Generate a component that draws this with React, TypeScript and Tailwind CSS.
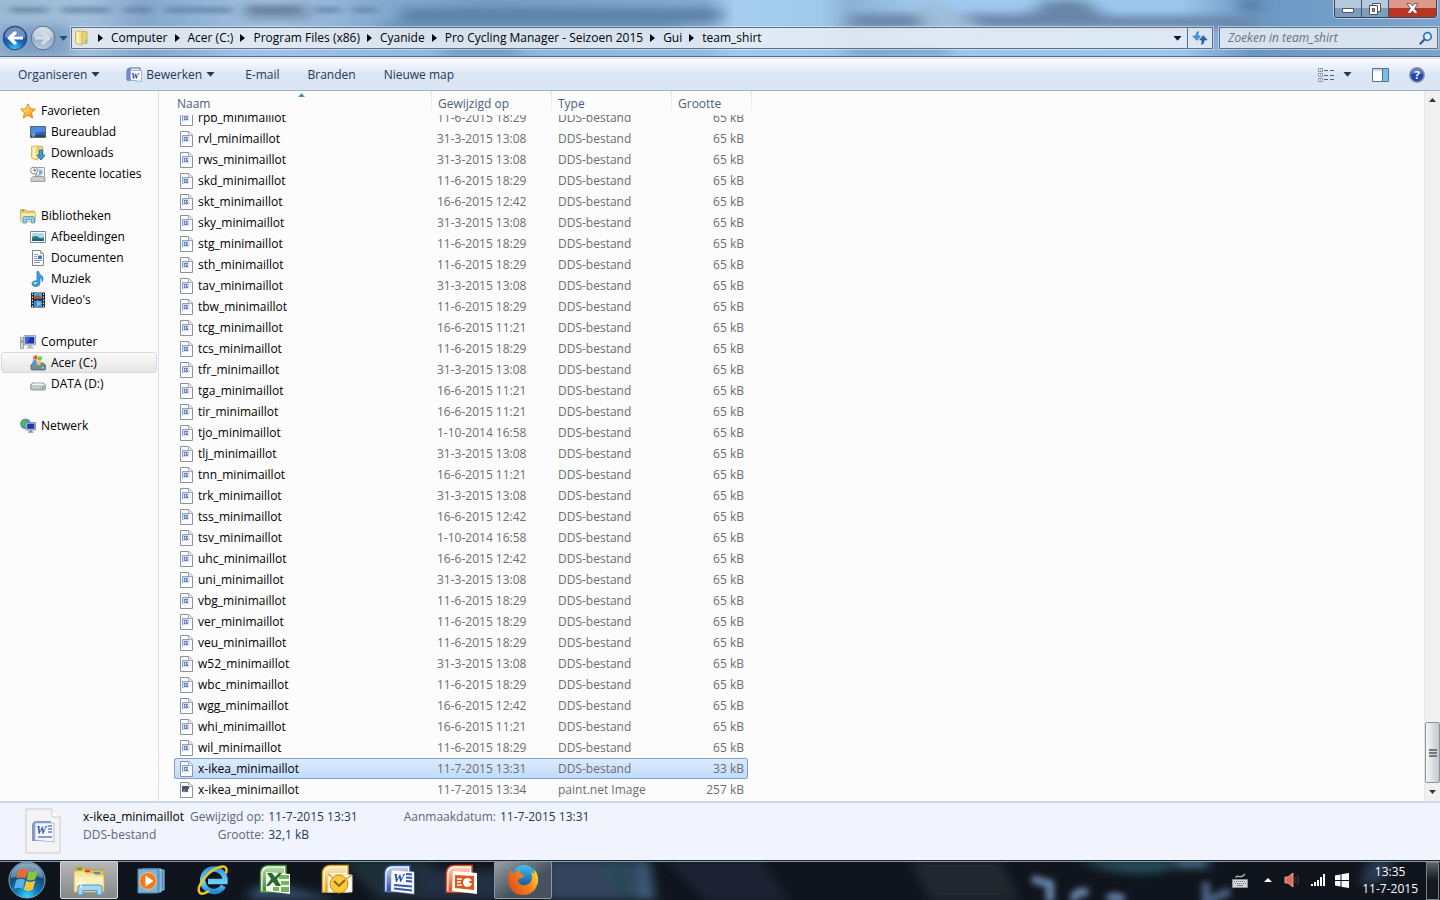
import type { ReactNode } from "react";

type FileRow = { name: string; date: string; type: string; size: string };

const A = "31-3-2015 13:08";
const B = "11-6-2015 18:29";
const C = "16-6-2015 12:42";
const D = "16-6-2015 11:21";
const E = "1-10-2014 16:58";

const teams: [string, string][] = [
  ["rpb", B], ["rvl", A], ["rws", A], ["skd", B], ["skt", C], ["sky", A], ["stg", B], ["sth", B],
  ["tav", A], ["tbw", B], ["tcg", D], ["tcs", B], ["tfr", A], ["tga", D], ["tir", D], ["tjo", E],
  ["tlj", A], ["tnn", D], ["trk", A], ["tss", C], ["tsv", E], ["uhc", C], ["uni", A], ["vbg", B],
  ["ver", B], ["veu", B], ["w52", A], ["wbc", B], ["wgg", C], ["whi", D], ["wil", B],
];

const files: FileRow[] = [
  ...teams.map(([t, date]) => ({ name: `${t}_minimaillot`, date, type: "DDS-bestand", size: "65 kB" })),
  { name: "x-ikea_minimaillot", date: "11-7-2015 13:31", type: "DDS-bestand", size: "33 kB" },
  { name: "x-ikea_minimaillot", date: "11-7-2015 13:34", type: "paint.net Image", size: "257 kB" },
];

const crumbs = ["Computer", "Acer (C:)", "Program Files (x86)", "Cyanide", "Pro Cycling Manager - Seizoen 2015", "Gui", "team_shirt"];

/* ---------- icons ---------- */

const DocIcon = ({ paint = false }: { paint?: boolean }) => (
  <svg width="13" height="16" viewBox="0 0 13 16" className="shrink-0">
    <path d="M.5.5h8.500l3.500 3.500v11.500H.5z" fill="#fbfcfd" stroke="#8e9196" />
    <path d="M8.500.5v4h4" fill="#e4e6ea" stroke="#a9acb1" />
    {paint ? (
      <>
        <path d="M2 4h6v6H2z" fill="#44546f" />
        <path d="M2 10l3-3 3 3z" fill="#8b97ae" />
        <path d="M5 10l4-5" stroke="#6b4a48" strokeWidth="1.500" />
      </>
    ) : (
      <>
        <path d="M2 4h7v7H2z" fill="#d3dcf0" />
        <path d="M2.500 11V4.500H9" fill="none" stroke="#8ba1d2" />
        <path d="M4 6h4v4H4z" fill="#6a85c2" />
        <path d="M5 7h1v2H5zM7 7h1v1H7z" fill="#e4eaf6" />
      </>
    )}
  </svg>
);

const WordSmall = () => (
  <svg width="16" height="16" viewBox="0 0 16 16">
    <path d="M1 4q0-3 3-3h10v12H1z" fill="#e9eefa" stroke="#4a66ad" />
    <path d="M1 14V4q0-3 3-3h1v12z" fill="#6f8bcb" />
    <path d="M4.500 3.500h11v11l-11-1.500z" fill="#fff" stroke="#9fb0d6" />
    <text x="5" y="12" fontSize="9" fontWeight="700" fontStyle="italic" fill="#2a479c" fontFamily="Liberation Serif, serif">W</text>
  </svg>
);

const StarIcon = () => (
  <svg width="16" height="16" viewBox="0 0 16 16">
    <defs>
      <linearGradient id="star" x1="0" y1="0" x2="1" y2="1">
        <stop offset="0" stopColor="#fff3a0" />
        <stop offset=".5" stopColor="#ffc33c" />
        <stop offset="1" stopColor="#f08018" />
      </linearGradient>
    </defs>
    <path d="M8 .8l2.200 4.900 5.200.5-3.900 3.500 1.200 5.300L8 12.200 3.300 15l1.200-5.300L.6 6.200l5.200-.5z" fill="url(#star)" stroke="#d98324" strokeWidth=".9" />
  </svg>
);

const DesktopIcon = () => (
  <svg width="16" height="16" viewBox="0 0 16 16">
    <path d="M.5 2.500h15v11H.5z" fill="#2d62c0" stroke="#5b6470" />
    <path d="M1 3h14v5Q8 7 1 11z" fill="#4f8ae0" />
    <path d="M1 11h14v2H1z" fill="#39404b" />
    <circle cx="3.500" cy="11" r="2" fill="#3f9fdc" />
    <path d="M2.500 10h1v1h-1z" fill="#f0a33a" />
    <path d="M4 10h1v1H4z" fill="#8fd04a" />
  </svg>
);

const FolderIcon = ({ arrow = false }: { arrow?: boolean }) => (
  <svg width="16" height="16" viewBox="0 0 16 16">
    <path d="M5 1.500h7q1 0 1 1v11H5z" fill="#ead27c" stroke="#c4a444" strokeWidth=".8" />
    <path d="M1.500 1.500L7 .8q1 0 1 1v13.400l-5-1.500q-1.500 0-1.500-1z" fill="#f5e18c" stroke="#cdae4e" strokeWidth=".8" />
    <path d="M3 2h2v11H3z" fill="#fff4bf" />
    {arrow ? (
      <path d="M9.500 5h3v5H15l-4 5-4-5h2.500z" fill="#3f9ade" stroke="#1c62a6" strokeWidth=".8" />
    ) : (
      <path d="M11 9.500h1.500v3H11z" fill="#63bfe8" />
    )}
  </svg>
);

const RecentIcon = () => (
  <svg width="16" height="16" viewBox="0 0 16 16">
    <path d="M5.500 1.500h9v11h-9z" fill="#eef1f4" stroke="#9ba1a8" />
    <path d="M7 4h5M9 6h4M6 9h5" stroke="#7ea3c8" />
    <path d="M9 5h3v3H9z" fill="#74a6cf" />
    <path d="M1 12.500l2-2h10l2 2v3H1z" fill="#c8ccd1" stroke="#888d94" strokeWidth=".8" />
    <circle cx="4" cy="4.500" r="3.500" fill="#f7f8f9" stroke="#878c92" />
    <path d="M4 2.500v2h2" fill="none" stroke="#4f545b" />
  </svg>
);

const LibraryIcon = () => (
  <svg width="16" height="16" viewBox="0 0 16 16">
    <path d="M.5 2.500q0-1 1-1h4l1 1.500h8v9H.5z" fill="#e9cf73" stroke="#c0a149" strokeWidth=".7" />
    <path d="M.7 4.500h14.800v9H.7z" fill="#fae9a0" stroke="#cfb35c" strokeWidth=".7" />
    <path d="M2 2h2v1H2z" fill="#3cae3c" />
    <path d="M3 15V10q0-1.500 1.500-1.500h8.500q1.500 0 1.500 1.500v5h-3v-3.500h-5V15z" fill="#8fcdee" stroke="#4793c2" strokeWidth=".8" />
  </svg>
);

const PictureIcon = () => (
  <svg width="16" height="16" viewBox="0 0 16 16">
    <path d="M.5 2.500h15v11H.5z" fill="#fff" stroke="#7e8790" />
    <path d="M2 4h12v8H2z" fill="#a9dcf4" />
    <path d="M2 8q4-2 7 .5 3 1 5-.5v4H2z" fill="#2f8568" />
    <path d="M2 10.500q6-1.500 12 .5v1H2z" fill="#18629c" />
  </svg>
);

const DocumentIcon = () => (
  <svg width="16" height="16" viewBox="0 0 16 16">
    <path d="M2.500.5h8l3 3v12h-11z" fill="#fdfdfe" stroke="#80868e" />
    <path d="M10.500.5v3h3" fill="#dfe3e8" stroke="#969ba2" />
    <path d="M4 4.500h4M4 6.500h3M4 8.500h3M4 10.500h8M4 12.500h6" stroke="#8c9bb5" />
    <path d="M8 5.500h4V9H8z" fill="#3d7cc4" />
  </svg>
);

const MusicIcon = () => (
  <svg width="16" height="16" viewBox="0 0 16 16">
    <path d="M8.500.5q.5 2.500 3 4 2.800 2.500.8 6 .2-3-2.300-4.200V12q0 3.300-4 3.500-4 0-4-2.800 0-3.200 5-2.900V.5z" fill="#3d9fe0" stroke="#1d6fb5" strokeWidth=".7" />
    <ellipse cx="5.200" cy="12.200" rx="1.800" ry="1.100" fill="#a3dbf8" />
  </svg>
);

const VideoIcon = () => (
  <svg width="16" height="16" viewBox="0 0 16 16">
    <path d="M1 .5h14v15H1z" fill="#23282e" />
    <path d="M4 1h8v6H4z" fill="#4da4dc" />
    <path d="M4 8.500h8V15H4z" fill="#3c8ed0" />
    <path d="M4 5l4-2 4 3v1H4z" fill="#b0512e" />
    <path d="M7 8.500l5 3-5 3z" fill="#74c4f0" />
    <path d="M2.500 1.500v14M13.500 1.500v14" stroke="#dfe6ec" strokeDasharray="1.500 1.500" />
  </svg>
);

const ComputerIcon = () => (
  <svg width="16" height="16" viewBox="0 0 16 16">
    <path d="M.5 3.500h3v11h-3z" fill="#d5d9dd" stroke="#888e95" strokeWidth=".8" />
    <path d="M1.300 6h1.300v3H1.300z" fill="#4bb541" />
    <path d="M4 1.500h11.500v9.500H4z" fill="#d9dde2" stroke="#8a9097" strokeWidth=".8" />
    <path d="M5.300 2.800h9v6.800h-9z" fill="#1b35b5" />
    <path d="M5.300 2.800h5L7 9.600H5.300z" fill="#4468dd" />
    <path d="M8.500 11h3v2h2v1.500h-7V13h2z" fill="#aab0b7" />
  </svg>
);

const DriveIcon = ({ system = false }: { system?: boolean }) => (
  <svg width="16" height="16" viewBox="0 0 16 16">
    {system ? (
      <>
        <path d="M1 10l2-2h10l2.500 2v4q0 1-1 1h-12q-1.500 0-1.500-1z" fill="#6c8e9c" stroke="#4b6470" strokeWidth=".8" />
        <path d="M12 12h2v1.500h-2z" fill="#8df070" />
        <path d="M3.500 1.500Q6-.5 7.500 1L7 5Q5 3.500 3 5z" fill="#ee5b28" />
        <path d="M8.200 1.200q2 1 4-.2l-.8 4q-2 1-3.900 0z" fill="#7cc142" />
        <path d="M2.800 5.800q2-1.300 4-.2l-.7 3.900q-2-1-4 0z" fill="#3f9de0" />
        <path d="M7.300 5.900q2 1 4-.1l-.9 4q-2 1-3.900 0z" fill="#fac42d" />
      </>
    ) : (
      <>
        <path d="M.6 10Q.6 7.500 3 7h10q2.500.5 2.500 3v2.500q0 1.500-1.500 1.500H2Q.6 14 .6 12.500z" fill="#c5c8cb" stroke="#7b7f84" strokeWidth=".8" />
        <path d="M2 8.500q1-1 2-1h8.500q1.500 0 2 1.500H2z" fill="#f6f7f8" />
        <path d="M12 10.500h1.800v2H12z" fill="#4cc034" />
      </>
    )}
  </svg>
);

const NetworkIcon = () => (
  <svg width="16" height="16" viewBox="0 0 16 16">
    <circle cx="5.500" cy="5.800" r="5.300" fill="#3d8fd4" />
    <path d="M2 2.500q3-2 5-1L5 5l2 2-2 3-3-3-1.500-.5Q.5 4 2 2.500z" fill="#59b848" />
    <path d="M6 4.500h9.500v7.500H6z" fill="#c9d0da" stroke="#7f8791" strokeWidth=".8" />
    <path d="M7.200 5.600h7.200v5.200H7.200z" fill="#1c37bd" />
    <path d="M9.500 12h2.500v1.500h1.500v1.300H8v-1.300h1.500z" fill="#8d949d" />
  </svg>
);

const Down = () => (
  <svg width="9" height="5" viewBox="0 0 9 5">
    <path d="M.5 0h8L4.500 4.800z" fill="currentColor" />
  </svg>
);

const WindowsOrb = () => (
  <svg width="40" height="40" viewBox="0 0 40 40">
    <defs>
      <radialGradient id="orb" cx=".5" cy=".95" r=".9">
        <stop offset="0" stopColor="#2fd8ff" />
        <stop offset=".35" stopColor="#1279bb" />
        <stop offset=".7" stopColor="#164a78" />
        <stop offset="1" stopColor="#5e87a5" />
      </radialGradient>
    </defs>
    <circle cx="20" cy="20" r="18" fill="url(#orb)" stroke="#7fa9c6" strokeWidth="1" />
    <path d="M4 18Q5 4 20 3.500 35 4 36 18q-15-5-32 0z" fill="#fff" opacity=".3" />
    <path d="M11.500 10.500q4.500-3 9-.5l-2.200 8.800q-4.300-2.500-8.800 0z" fill="#ee6a2e" />
    <path d="M21.800 10.800q4.500 2.500 9-.8l-2.300 9q-4.500 2.800-8.900.2z" fill="#8cc63f" />
    <path d="M9.200 20.200q4.500-2.700 8.800-.2l-2.200 9q-4.500-2.500-9 .2z" fill="#58b1ea" />
    <path d="M19.200 20.700q4.500 2.500 9-.2l-2.300 9q-4.500 2.700-9 .1z" fill="#fdc530" />
  </svg>
);

const ExplorerIcon = () => (
  <svg width="34" height="32" viewBox="0 0 34 32">
    <path d="M3 5q0-2 2-2h6l2 2h6l2 1h9q2 0 2 2v20H3z" fill="#e0bd58" stroke="#b5923a" strokeWidth=".8" />
    <path d="M2 7h11l1 2h9l1 2h8v17H2z" fill="#f7e59b" stroke="#d0b056" strokeWidth=".8" />
    <path d="M5 4h5v2H5z" fill="#35b13b" />
    <path d="M13 6h5v2h-5z" fill="#d94830" />
    <path d="M22 8h6v2h-6z" fill="#3f8cdc" />
    <path d="M3 13h28v8H3z" fill="#fdf2bd" opacity=".8" />
    <path d="M6 31v-7q0-3 3-3h18q3 0 3 3v7h-5v-4.500H11V31z" fill="#a3d8f2" stroke="#4a96c4" />
    <path d="M9 14v10M4 19h10" stroke="#fff" />
  </svg>
);

const MediaPlayerIcon = () => (
  <svg width="30" height="30" viewBox="0 0 30 30">
    <path d="M10 5h18v20H10z" fill="#4d87b8" stroke="#a6cde8" />
    <path d="M6 4h19v23H6z" fill="#6aa4d0" stroke="#a6cde8" />
    <path d="M2 4h20v24H2z" fill="#7fb4dc" stroke="#4b85b4" />
    <circle cx="12" cy="16" r="8.500" fill="#f27a1c" stroke="#fbbd82" />
    <path d="M9.500 10.500l8 5.500-8 5.500z" fill="#fff" />
  </svg>
);

const IeIcon = () => (
  <svg width="32" height="32" viewBox="0 0 32 32">
    <defs>
      <linearGradient id="ie" x1="0" y1="0" x2="0" y2="1">
        <stop offset="0" stopColor="#2f9fe6" />
        <stop offset=".6" stopColor="#6bd2fa" />
        <stop offset="1" stopColor="#2389d8" />
      </linearGradient>
    </defs>
    <path d="M26.500 22A11.200 11.200 0 1 1 28 17.500H11" fill="none" stroke="url(#ie)" strokeWidth="5.500" />
    <path d="M29 9.500Q31 2 25 2.500 16 3.500 7 14.500-1 25 3 29q3 2 9-2" fill="none" stroke="#f7c21c" strokeWidth="2.500" />
  </svg>
);

type OfficeProps = { id: string; color: string; light: string; children: ReactNode };

const OfficeIcon = ({ id, color, light, children }: OfficeProps) => (
  <svg width="32" height="32" viewBox="0 0 32 32">
    <defs>
      <linearGradient id={id} x1="0" y1="0" x2="0" y2="1">
        <stop offset="0" stopColor={light} />
        <stop offset="1" stopColor={color} />
      </linearGradient>
    </defs>
    <path d="M1.500 28V9Q2 2 9 1.500h18V28z" fill="#fff" stroke={color} strokeWidth="1.500" />
    <path d="M3.500 27V10Q4 4 10 3.500h15V9H8v18z" fill={`url(#${id})`} />
    {children}
  </svg>
);

const ExcelIcon = () => (
  <OfficeIcon id="xls" color="#3c8a35" light="#b3d9a6">
    <path d="M7 8l24 2v20L7 27z" fill="#f4faf0" />
    <path d="M20 11h10v4H20zM22 17h8v4h-8zM22 23h8v5h-8zM14 23h6v4h-6z" fill="#75b45c" />
    <path d="M8 9h5l3 4 4-4h3l-5 6 4 7h-5l-3-4-4 4H7l5-7z" fill="#256d28" />
  </OfficeIcon>
);

const OutlookIcon = () => (
  <OfficeIcon id="olk" color="#e59f14" light="#fde7ae">
    <path d="M7 10l24 1v17H7z" fill="#fff" stroke="#e5d6ab" />
    <path d="M7 10l12 9 12-8" fill="none" stroke="#d69722" strokeWidth="1.500" />
    <circle cx="18" cy="20" r="9" fill="#fbca3b" stroke="#c98c14" />
    <path d="M13 17l5 5 6-6" fill="none" stroke="#8a640e" strokeWidth="1.800" />
  </OfficeIcon>
);

const WordIcon = () => (
  <OfficeIcon id="doc" color="#2b4f9e" light="#c2d0ec">
    <path d="M9 6l22 2v22L8 27z" fill="#fbfcff" stroke="#b8c5e4" strokeWidth=".6" />
    <text x="10" y="18" fontSize="13" fontWeight="700" fontStyle="italic" fill="#24479a" fontFamily="Liberation Serif, serif">W</text>
    <path d="M23 10l6 .5M23 13.500l6 .5M23 17l6 .5M11 21l18 1.500M11 24.500l18 2" stroke="#3558a8" strokeWidth="1.800" />
  </OfficeIcon>
);

const PowerPointIcon = () => (
  <OfficeIcon id="ppt" color="#dd4f1c" light="#fbd0bb">
    <path d="M8 7l24 2v21L7 27z" fill="#fff" />
    <path d="M10 11l19 1v14l-19-2z" fill="#e2551d" />
    <circle cx="22.500" cy="18.500" r="4.500" fill="#fff" />
    <path d="M23 18l5-2v4z" fill="#e2551d" />
    <path d="M12 15h5M12 18h4M12 21h5" stroke="#fff" strokeWidth="1.500" />
  </OfficeIcon>
);

const FirefoxIcon = () => (
  <svg width="32" height="32" viewBox="0 0 32 32">
    <defs>
      <linearGradient id="fox" x1="0" y1=".8" x2="1" y2=".2">
        <stop offset="0" stopColor="#dd4a1e" />
        <stop offset=".6" stopColor="#f5871c" />
        <stop offset="1" stopColor="#ffe43a" />
      </linearGradient>
      <linearGradient id="globe" x1="0" y1="0" x2="0" y2="1">
        <stop offset="0" stopColor="#3fc4f2" />
        <stop offset="1" stopColor="#123f86" />
      </linearGradient>
    </defs>
    <circle cx="17" cy="13.500" r="12.500" fill="url(#globe)" />
    <path d="M27 5q5 6 4 13-3 13-15 13T1 18Q.5 11 4 5l1 4 5-1 3-3q0 4 1 5l3 2q-1 2-5 2.500-2 2 0 4.500 4 4 9 1 6-3 3-13l3 3q1-3 0-8z" fill="url(#fox)" />
  </svg>
);

/* ---------- window chrome ---------- */

const TitleGlass = () => (
  <svg className="absolute inset-0 h-full w-full" viewBox="0 0 1440 56" preserveAspectRatio="none" aria-hidden="true">
    <defs>
      <filter id="soft" x="-20%" y="-60%" width="140%" height="220%">
        <feGaussianBlur stdDeviation="9 4" />
      </filter>
      <filter id="labels" x="-10%" y="-100%" width="120%" height="300%">
        <feGaussianBlur stdDeviation="5 2" />
      </filter>
      <linearGradient id="glass" x1="0" y1="0" x2="1" y2="0">
        <stop offset="0" stopColor="#9db9d4" />
        <stop offset=".06" stopColor="#a3bfdb" />
        <stop offset=".1" stopColor="#85a7cb" />
        <stop offset=".19" stopColor="#a3c4e4" />
        <stop offset=".26" stopColor="#86abd0" />
        <stop offset=".34" stopColor="#769dc5" />
        <stop offset=".49" stopColor="#83abd2" />
        <stop offset=".51" stopColor="#a8cfef" />
        <stop offset=".57" stopColor="#a0c8ea" />
        <stop offset=".59" stopColor="#8db3d2" />
        <stop offset=".64" stopColor="#a0caf0" />
        <stop offset=".82" stopColor="#9cc6ec" />
        <stop offset=".87" stopColor="#6a98c4" />
        <stop offset="1" stopColor="#7da4cb" />
      </linearGradient>
    </defs>
    <path d="M0 0h1440v56H0z" fill="url(#glass)" />
    <g filter="url(#soft)">
      <path d="M400 8h320v14H400z" fill="#5f81a6" />
      <path d="M380 22h300v14H380z" fill="#6b95c0" />
      <path d="M245 4h65v16h-65z" fill="#7d93af" />
      <path d="M850 14h180l15-14h40l20 16h150v12H850z" fill="#6786a8" />
      <path d="M915 0h20l50 30h-60z" fill="#9dbedc" />
      <path d="M1240 0h20v10h-20z" fill="#55749a" />
      <path d="M0 26h70v30H0z" fill="#7c9fc4" />
      <path d="M220 49h900v8H220z" fill="#9cc4ea" />
      <path d="M440 48h80v7h-80zM850 48h100v7H850z" fill="#7198c0" />
    </g>
    <g filter="url(#labels)" fill="#5f7d9e" opacity=".7">
      <path d="M10 7h38v6H10zM62 7h48v6H62zM124 7h28v6h-28zM166 7h66v6h-66zM248 7h52v6h-52zM316 7h24v6h-24zM352 7h24v6h-24z" />
    </g>
  </svg>
);

const WindowButtons = () => (
  <div className="absolute right-[3px] top-0 flex h-[18px] overflow-hidden rounded-b border border-t-0 border-[#33465e] shadow-[0_0_0_1px_#b8cde3]">
    <button aria-label="Minimaliseren" className="flex w-[27px] items-center justify-center border-r border-[#3f536c] bg-gradient-to-b from-[#b7c9dc] from-50% to-[#7f9dbb] to-50%">
      <svg width="12" height="5" viewBox="0 0 12 5" className="mt-1"><path d="M.5.5h11v4H.5z" fill="#fff" stroke="#4c5666" /></svg>
    </button>
    <button aria-label="Vorig formaat" className="flex w-[27px] items-center justify-center border-r border-[#3f536c] bg-gradient-to-b from-[#b7c9dc] from-50% to-[#7f9dbb] to-50%">
      <svg width="12" height="12" viewBox="0 0 12 12">
        <path d="M3.500.5h8v8h-8z" fill="#fff" stroke="#4c5666" />
        <path d="M.5 2.500h8v9h-8z" fill="#fff" stroke="#4c5666" />
        <path d="M3.500 5.500h2v3h-2z" fill="#8ba5c0" stroke="#4c5666" />
      </svg>
    </button>
    <button aria-label="Sluiten" className="flex w-[47px] items-center justify-center bg-gradient-to-b from-[#dd9a8c] from-50% to-[#bb3420] to-50%">
      <svg width="13" height="11" viewBox="0 0 13 11">
        <path d="M1 .7h3.500l2 2.200 2-2.200H12L8.700 5.400 12 10.300H8.500l-2-2.300-2 2.300H1l3.300-4.900z" fill="#fff" stroke="#5a4a52" strokeWidth=".9" />
      </svg>
    </button>
  </div>
);

const NavArrow = ({ active = false }: { active?: boolean }) => (
  <svg width="26" height="26" viewBox="0 0 26 26">
    <defs>
      <radialGradient id="back" cx=".5" cy="1" r=".9">
        <stop offset="0" stopColor="#3fd0ff" />
        <stop offset=".5" stopColor="#1660b8" />
        <stop offset="1" stopColor="#2a4f9a" />
      </radialGradient>
      <linearGradient id="fwd" x1="0" y1="0" x2="0" y2="1">
        <stop offset="0" stopColor="#c4d2e0" />
        <stop offset=".5" stopColor="#96acc2" />
        <stop offset="1" stopColor="#b7cbdd" />
      </linearGradient>
    </defs>
    <circle cx="13" cy="13" r="11.800" fill={active ? "url(#back)" : "url(#fwd)"} stroke={active ? "#23416f" : "#5c7189"} />
    <path d="M2.500 12.500a10.500 10.500 0 0 1 21 0q-10-3-21 0z" fill="#fff" opacity=".35" />
    {active ? (
      <path d="M5 13l7-6.500h2.500V9l-3 2.500H21v3h-9.500l3 2.500v2.500H12z" fill="#fff" />
    ) : (
      <path d="M21 13l-7-6.500h-2.500V9l3 2.500H5v3h9.500l-3 2.500v2.500H14z" fill="#d3dde7" />
    )}
  </svg>
);

const AddressRow = () => (
  <header className="relative h-[57px] border-b border-[#5c6f8a]">
    <TitleGlass />
    <WindowButtons />
    <div className="relative flex items-center px-[2px] pt-[25px]">
      <button aria-label="Terug"><NavArrow active /></button>
      <button aria-label="Vooruit" className="ml-[2px]"><NavArrow /></button>
      <button aria-label="Recente pagina's" className="ml-[3px] text-[#1d4a80]"><Down /></button>
      <nav aria-label="Adres" className="ml-[3px] flex h-[22px] flex-1 items-center border border-[#5d7186] bg-[#e9eff6]/85 shadow-[0_0_0_1px_#ffffff70]">
        <span className="ml-[2px] mr-px"><FolderIcon /></span>
        <ol className="flex flex-1 items-center">
          {crumbs.map((c) => (
            <li key={c} className="flex items-center">
              <svg width="5" height="8" viewBox="0 0 5 8" className="ml-[7px] mr-2"><path d="M0 0l5 4-5 4z" fill="#000" /></svg>
              <a href="#" className="text-black">{c}</a>
            </li>
          ))}
        </ol>
        <button aria-label="Vorige locaties" className="px-[5px] text-[#08124e]"><Down /></button>
        <button aria-label="Vernieuwen" className="flex h-full w-[25px] items-center justify-center border-l border-[#5d7186]">
          <svg width="16" height="14" viewBox="0 0 16 14">
            <path d="M6.500.5Q4 1 4 4v1H.8l4 4.500L8.500 5H6q0-3 .5-4.500z" fill="#3f9be0" stroke="#2575b9" strokeWidth=".6" />
            <path d="M9.500 13.500q2.500-.5 2.500-3.500V9h3.200l-4-4.500L7.500 9H10q0 3-.5 4.500z" fill="#2f62ad" stroke="#234f92" strokeWidth=".6" />
          </svg>
        </button>
      </nav>
      <form className="ml-[6px] flex h-[22px] w-[219px] items-center border border-[#5d7186] bg-[#e9eff6]/85 shadow-[0_0_0_1px_#ffffff70]">
        <input aria-label="Zoeken" placeholder="Zoeken in team_shirt" className="min-w-0 flex-1 bg-transparent pl-2 italic text-[#5f6670] outline-none placeholder:text-[#6a727c]" />
        <button type="button" aria-label="Zoeken starten" className="mr-1">
          <svg width="14" height="14" viewBox="0 0 14 14">
            <circle cx="8.500" cy="5.500" r="3.800" fill="#dcefff" stroke="#2f74bd" strokeWidth="1.700" />
            <path d="M5.500 8.500L1.500 12.500" stroke="#34548c" strokeWidth="2.200" strokeLinecap="round" />
          </svg>
        </button>
      </form>
    </div>
  </header>
);

const Toolbar = () => (
  <div className="flex h-[34px] items-center border-b border-[#a0afc9] border-t-2 border-t-[#e4e2f4] bg-gradient-to-b from-[#fafcff] to-[#dbe6f4] to-50% pl-[18px] text-[#1e395b]">
    <button className="flex items-center gap-1">Organiseren <Down /></button>
    <button className="ml-[26px] flex items-center gap-1"><WordSmall /> Bewerken <Down /></button>
    <button className="ml-[30px]">E-mail</button>
    <button className="ml-7">Branden</button>
    <button className="ml-7 flex-1 text-left">Nieuwe map</button>
    <button aria-label="Weergave wijzigen" className="flex items-center gap-2">
      <svg width="17" height="14" viewBox="0 0 17 14">
        <path d="M.5.5h4v3h-4zM.5 5.500h4v3h-4zM.5 10.500h4v3h-4z" fill="#fff" stroke="#8a97aa" />
        <path d="M2 1.500h1v1H2z" fill="#3b78c8" /><path d="M2 6.500h1v1H2z" fill="#c54334" /><path d="M2 11.500h1v1H2z" fill="#3b93c8" />
        <path d="M6 2.500h4M12 2.500h4M6 7.500h4M12 7.500h4M6 11.500h4M12 11.500h4" stroke="#53657f" />
      </svg>
      <Down />
    </button>
    <button aria-label="Voorbeeldvenster" className="ml-5">
      <svg width="17" height="14" viewBox="0 0 17 14">
        <path d="M.5.5h16v13H.5z" fill="#fff" stroke="#5a6f8b" />
        <path d="M1 1h10v2H1z" fill="#c9d9ea" />
        <path d="M11 1h5v12h-5z" fill="#74c1e2" /><path d="M10.500 1v12" stroke="#5a6f8b" />
      </svg>
    </button>
    <button aria-label="Help" className="ml-5 mr-[15px]">
      <svg width="16" height="16" viewBox="0 0 16 16">
        <circle cx="8" cy="8" r="7.200" fill="#2247b3" stroke="#8d949e" strokeWidth="1.500" />
        <path d="M2.500 7a5.500 5.500 0 0 1 11 0q-5-2-11 0z" fill="#7c98e0" opacity=".7" />
        <text x="8" y="12" fontSize="11" fontWeight="700" textAnchor="middle" fill="#fff" fontFamily="Open Sans, sans-serif">?</text>
      </svg>
    </button>
  </div>
);

/* ---------- navigation pane ---------- */

type NavItem = { label: string; icon: ReactNode; active?: boolean };

const groups: { title: string; icon: ReactNode; items: NavItem[] }[] = [
  { title: "Favorieten", icon: <StarIcon />, items: [
    { label: "Bureaublad", icon: <DesktopIcon /> },
    { label: "Downloads", icon: <FolderIcon arrow /> },
    { label: "Recente locaties", icon: <RecentIcon /> },
  ] },
  { title: "Bibliotheken", icon: <LibraryIcon />, items: [
    { label: "Afbeeldingen", icon: <PictureIcon /> },
    { label: "Documenten", icon: <DocumentIcon /> },
    { label: "Muziek", icon: <MusicIcon /> },
    { label: "Video's", icon: <VideoIcon /> },
  ] },
  { title: "Computer", icon: <ComputerIcon />, items: [
    { label: "Acer (C:)", icon: <DriveIcon system />, active: true },
    { label: "DATA (D:)", icon: <DriveIcon /> },
  ] },
  { title: "Netwerk", icon: <NetworkIcon />, items: [] },
];

const Sidebar = () => (
  <aside className="flex w-[159px] shrink-0 flex-col gap-[21px] border-r border-[#d6e5f5] px-px pt-[9px]">
    {groups.map((g) => (
      <div key={g.title}>
        <a href="#" className="flex h-[21px] items-center gap-[5px] pl-[19px]">{g.icon} {g.title}</a>
        <ul>
          {g.items.map((it) => (
            <li key={it.label}>
              <a
                href="#"
                className={
                  it.active
                    ? "flex h-[21px] items-center gap-[5px] rounded-[3px] border border-[#d9d9d9] bg-gradient-to-b from-[#fafafa] to-[#e6e6e6] pl-7"
                    : "flex h-[21px] items-center gap-[5px] pl-[29px]"
                }
              >
                {it.icon} {it.label}
              </a>
            </li>
          ))}
        </ul>
      </div>
    ))}
  </aside>
);

/* ---------- file list ---------- */

const headCell = "relative h-6 bg-[#fcfcfc] p-0 pl-[6px] pt-px text-left font-normal leading-3";

const Separator = () => <span className="absolute right-0 top-0 h-5 w-px bg-gradient-to-b from-[#d5e4f3] to-[#eef4fa]" />;

const FileList = () => (
  <main className="flex min-w-0 flex-1">
    {/* column-reverse keeps the list scrolled to its end */}
    <div className="flex flex-1 flex-col-reverse overflow-hidden pb-px pl-[15px]">
      <table className="w-[578px] shrink-0 table-fixed border-separate border-spacing-0">
        <colgroup>
          <col className="w-[258px]" />
          <col className="w-[120px]" />
          <col className="w-[120px]" />
          <col className="w-[76px]" />
          <col className="w-1" />
        </colgroup>
        <thead className="sticky top-0 z-10 text-[#4c607a]">
          <tr>
            <th className="relative h-6 bg-[#fcfcfc] p-0 pl-[3px] pt-px text-left font-normal leading-3">
              Naam
              <svg width="7" height="4" viewBox="0 0 7 4" className="absolute left-[124px] top-[2px]"><path d="M0 4l3.500-4L7 4z" fill="#4f93b8" /></svg>
              <Separator />
            </th>
            <th className={headCell}>Gewijzigd op<Separator /></th>
            <th className={headCell}>Type<Separator /></th>
            <th colSpan={2} className={headCell}>Grootte<Separator /></th>
          </tr>
        </thead>
        <tbody>
          {files.map((f) => {
            const selected = f.size === "33 kB";
            const cell = selected ? "h-[21px] border-y border-[#7da2ce] bg-gradient-to-b from-[#dcebfd] to-[#c1dbfc]" : "h-[21px]";
            return (
              <tr key={f.name + f.type} className="text-[#6d6d6d]">
                <td className={selected ? `${cell} rounded-l-[3px] border-l p-0 pl-[5px] text-black` : `${cell} p-0 pl-[6px] text-black`}>
                  <span className="flex items-center gap-[5px]">
                    <DocIcon paint={f.type === "paint.net Image"} /> {f.name}
                  </span>
                </td>
                <td className={`${cell} p-0 pl-[5px]`}>{f.date}</td>
                <td className={`${cell} p-0 pl-[6px]`}>{f.type}</td>
                <td className={selected ? `${cell} rounded-r-[3px] border-r p-0 pr-[3px] text-right` : `${cell} p-0 pr-1 text-right`}>{f.size}</td>
                <td className="p-0" />
              </tr>
            );
          })}
        </tbody>
      </table>
    </div>
    <div className="flex w-4 flex-col items-center border-l border-[#e6e6e6] bg-[#f0f0f0]">
      <button aria-label="Omhoog" className="flex h-[17px] items-center"><svg width="7" height="4" viewBox="0 0 7 4"><path d="M0 4l3.500-4L7 4z" fill="#333" /></svg></button>
      <div className="flex-1" />
      <div className="flex h-[61px] w-[15px] flex-col items-center justify-center gap-px rounded-xs border border-[#8f9298] bg-gradient-to-r from-[#f7f7f8] to-[#c6c7cc]">
        <span className="h-[2px] w-2 bg-[#777]" />
        <span className="h-[2px] w-2 bg-[#777]" />
        <span className="h-[2px] w-2 bg-[#777]" />
      </div>
      <button aria-label="Omlaag" className="flex h-[18px] items-center"><svg width="7" height="4" viewBox="0 0 7 4"><path d="M0 0h7L3.500 4z" fill="#333" /></svg></button>
    </div>
  </main>
);

const DetailsPane = () => (
  <footer className="flex h-[59px] border-t-2 border-[#cbd9ec] bg-[#f1f4fc] pl-[25px] leading-[18px] text-[#5a6779]">
    <svg width="36" height="46" viewBox="0 0 36 46" className="mt-[5px]">
      <path d="M1 1h26l8 8v36H1z" fill="#f4f4f5" stroke="#c9cbcf" />
      <path d="M27 1v8h8" fill="#fff" stroke="#c9cbcf" />
      <path d="M7 33V18q0-5 5-5h14v20z" fill="#7f98c8" />
      <path d="M10 15h19v19l-19-2z" fill="#f5f7fc" stroke="#9fb0d4" strokeWidth=".8" />
      <text x="11" y="26" fontSize="12" fontWeight="700" fontStyle="italic" fill="#3557a3" fontFamily="Liberation Serif, serif">W</text>
      <path d="M23 18h4M23 21h4M23 24h4M13 29h14" stroke="#6482bf" strokeWidth="1.500" />
    </svg>
    <div className="ml-[22px] mt-[5px]">
      <p className="text-black">x-ikea_minimaillot</p>
      <p>DDS-bestand</p>
    </div>
    <dl className="ml-[6px] mt-[5px] grid grid-cols-[auto_auto] content-start gap-x-1">
      <dt className="text-right">Gewijzigd op:</dt><dd className="text-[#1e395b]">11-7-2015 13:31</dd>
      <dt className="text-right">Grootte:</dt><dd className="text-[#1e395b]">32,1 kB</dd>
    </dl>
    <dl className="ml-[46px] mt-[5px] flex gap-1">
      <dt>Aanmaakdatum:</dt><dd className="text-[#1e395b]">11-7-2015 13:31</dd>
    </dl>
  </footer>
);

/* ---------- taskbar ---------- */

const apps = [
  { label: "Windows Verkenner", icon: <ExplorerIcon />, style: "border-[#d6d8da] bg-gradient-to-b from-[#b5b7b9] to-[#85888b]" },
  { label: "Windows Media Player", icon: <MediaPlayerIcon />, style: "border-transparent" },
  { label: "Internet Explorer", icon: <IeIcon />, style: "border-transparent" },
  { label: "Excel", icon: <ExcelIcon />, style: "border-transparent" },
  { label: "Outlook", icon: <OutlookIcon />, style: "border-transparent" },
  { label: "Word", icon: <WordIcon />, style: "border-transparent" },
  { label: "PowerPoint", icon: <PowerPointIcon />, style: "border-transparent" },
  { label: "Firefox", icon: <FirefoxIcon />, style: "border-[#8e979f] bg-gradient-to-br from-[#9aa1a8] to-[#46525f] to-60%" },
];

const TaskbarGlass = () => (
  <svg className="absolute inset-0 h-full w-full" viewBox="0 0 1440 40" preserveAspectRatio="none" aria-hidden="true">
    <defs>
      <filter id="haze" x="-20%" y="-60%" width="140%" height="220%">
        <feGaussianBlur stdDeviation="6 4" />
      </filter>
      <filter id="strokes" x="-20%" y="-60%" width="140%" height="220%">
        <feGaussianBlur stdDeviation="3" />
      </filter>
    </defs>
    <path d="M0 0h1440v40H0z" fill="#10151d" />
    <g filter="url(#haze)">
      <path d="M340 0h90l30 40h-80z" fill="#1b2d38" />
      <path d="M420 10h80v30h-80z" fill="#222e42" />
      <path d="M545 0h95l12 40H545z" fill="#33455d" />
      <path d="M600 0h20l20 40h-20z" fill="#294959" />
      <path d="M641 0h8l6 40h-14z" fill="#41607f" />
      <path d="M665 0h95l30 40H705z" fill="#1a2430" />
      <path d="M910 0h90l20 40h-90z" fill="#22262e" />
      <path d="M250 30q20-10 50 0l40 10h-90z" fill="#344a66" />
      <path d="M1080 0h90v10q-50 10-90-10z" fill="#26505c" />
      <path d="M1172 0h36v7h-32z" fill="#5484a3" />
      <path d="M1370 0h25l-15 24h-20z" fill="#2c3e55" />
    </g>
    <g filter="url(#strokes)" fill="none" stroke="#7c9fcd" strokeWidth="8" opacity=".85">
      <path d="M1032 19l18 5v18M1088 33q-14-4-14 8M1108 40q6-6 16 0" />
      <path d="M1206 22v20l24-11" stroke="#54719a" />
    </g>
    <path d="M0 0h1440v1H0z" fill="#1d2a34" />
    <path d="M0 1h1440v1H0z" fill="#8a9aa3" />
  </svg>
);

const Taskbar = () => (
  <div className="relative h-10 overflow-hidden text-white">
    <TaskbarGlass />
    <div className="relative flex h-full items-center">
      <button aria-label="Start" className="ml-[7px] mr-[13px]"><WindowsOrb /></button>
      <div className="flex gap-1">
        {apps.map((a) => (
          <button key={a.label} aria-label={a.label} className={`flex h-[38px] w-[58px] items-center justify-center rounded-xs border ${a.style}`}>
            {a.icon}
          </button>
        ))}
      </div>
      <div className="ml-auto flex h-full items-center">
        <button aria-label="Toetsenbord">
          <svg width="16" height="15" viewBox="0 0 16 15">
            <path d="M4 5q0-2.500 3-1.500t6-2.500" fill="none" stroke="#b9bcc0" strokeWidth="1.200" />
            <path d="M.5 6.500h15v8H.5z" fill="#d3d5d8" stroke="#8b8e92" />
            <path d="M2 8.500h12M3 10.500h11" stroke="#7c7f84" strokeDasharray="1 1" /><path d="M5 12.500h6" stroke="#7c7f84" />
          </svg>
        </button>
        <button aria-label="Verborgen pictogrammen" className="ml-4"><svg width="8" height="4" viewBox="0 0 8 4"><path d="M0 4l4-4 4 4z" fill="#fff" /></svg></button>
        <button aria-label="Volume" className="ml-3">
          <svg width="16" height="16" viewBox="0 0 16 16">
            <path d="M1 5h3l5-4v14l-5-4H1z" fill="#e4694c" stroke="#f4c2b4" strokeWidth=".8" />
            <path d="M11 5q2 3 0 6M13 3q3 5 0 10" fill="none" stroke="#6c2a1d" />
          </svg>
        </button>
        <button aria-label="Netwerk" className="ml-[10px]">
          <svg width="16" height="12" viewBox="0 0 16 12"><path d="M1 10h2v2H1zM4 8h2v4H4zM7 6h2v6H7zM10 3h2v9h-2zM13 0h2v12h-2z" fill="#fff" /></svg>
        </button>
        <button aria-label="Windows 10 downloaden" className="ml-2">
          <svg width="16" height="15" viewBox="0 0 16 15"><path d="M1 2.500l5.500-1V7H1zM7.500 1.300L15 0v7H7.500zM1 8h5.500v5.500l-5.500-1zM7.500 8H15v7l-7.500-1.300z" fill="#fff" /></svg>
        </button>
        <time className="ml-3 text-center leading-[17px]">13:35<br />11-7-2015</time>
        <button aria-label="Bureaublad weergeven" className="ml-2 mr-px mt-px h-[38px] w-[13px] border border-[#7a8086] bg-gradient-to-b from-[#5b6167] to-[#15191e] to-50%" />
      </div>
    </div>
  </div>
);

const App = () => {
  return (
    <div className="flex h-screen flex-col overflow-hidden bg-[#fcfcfc] font-['Open_Sans',sans-serif] text-[12px] leading-4 text-black">
      <AddressRow />
      <Toolbar />
      <div className="flex min-h-0 flex-1">
        <Sidebar />
        <FileList />
      </div>
      <DetailsPane />
      <Taskbar />
    </div>
  );
};

export default App;
